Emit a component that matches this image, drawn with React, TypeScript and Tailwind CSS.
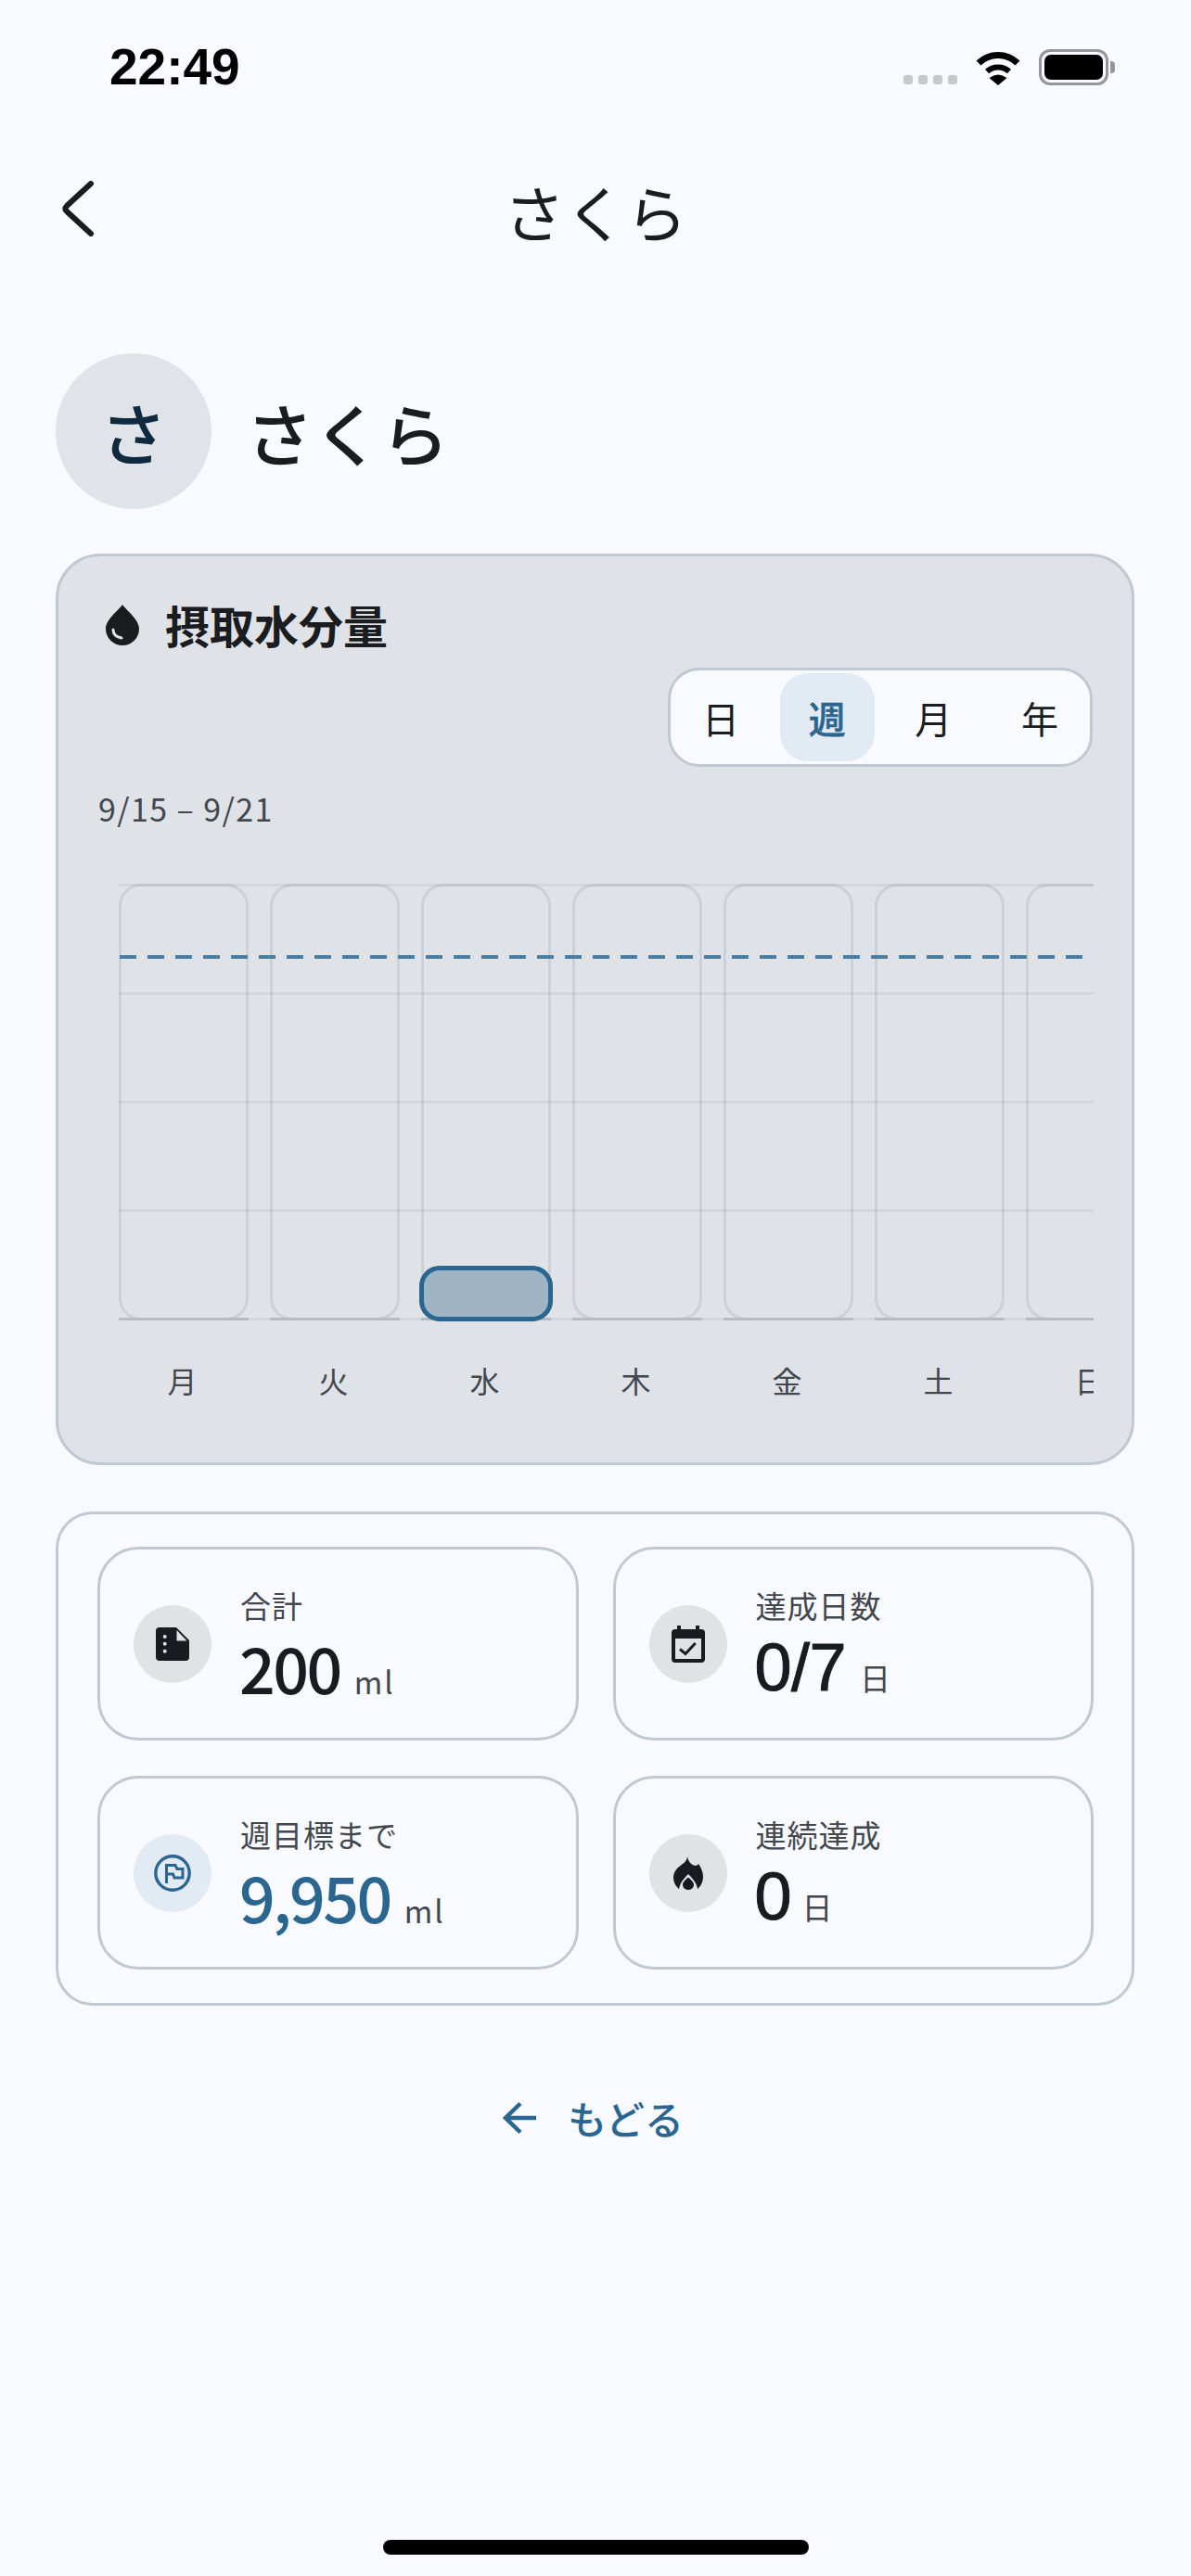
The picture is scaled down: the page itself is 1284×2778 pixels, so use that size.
const Wifi = () => (
  <svg width="50" height="37" viewBox="0 0 50 37" fill="none" className="block">
    <path d="M4 13 A30 30 0 0 1 46 13" stroke="#000" strokeWidth="7" />
    <path d="M13 22 A18 18 0 0 1 37 22" stroke="#000" strokeWidth="6" />
    <path d="M25 37 L15.5 29 Q25 22 34.5 29 Z" fill="#000" />
  </svg>
);

const DropIcon = () => (
  <svg width="36" height="44" viewBox="0 0 36 44" className="block">
    <path d="M18 0 C14 6 0 16 0 26 a18 18 0 0 0 36 0 C36 16 22 6 18 0 Z" fill="#1b1c1f" />
    <path d="M8 27 C8 32 11 35 17 36" fill="none" stroke="#dfe2e7" strokeWidth="3" strokeLinecap="round" />
  </svg>
);

const DocIcon = () => (
  <svg width="36" height="36" viewBox="0 0 36 36" className="block">
    <path d="M4 0 H22 L36 14 V32 a4 4 0 0 1 -4 4 H4 a4 4 0 0 1 -4 -4 V4 a4 4 0 0 1 4 -4 Z" fill="#181c20" />
    <path d="M22.5 3 V14.5 H33.5 Z" fill="#e0e2e6" />
    <circle cx="9.7" cy="10" r="2" fill="#e0e2e6" />
    <circle cx="9.7" cy="17.7" r="2" fill="#e0e2e6" />
    <circle cx="9.7" cy="25.7" r="2" fill="#e0e2e6" />
  </svg>
);

const CalendarIcon = () => (
  <svg width="36" height="40" viewBox="0 0 36 40" className="block">
    <path d="M6 0 H10 V4 H26 V0 H30 V4 H32 a4 4 0 0 1 4 4 V36 a4 4 0 0 1 -4 4 H4 a4 4 0 0 1 -4 -4 V8 a4 4 0 0 1 4 -4 H6 Z" fill="#181c20" />
    <rect x="4" y="14" width="28" height="22" fill="#e0e2e6" />
    <path d="M9 25.5 L15 30.5 L25.7 19" fill="none" stroke="#181c20" strokeWidth="3" />
  </svg>
);

const FlagIcon = () => (
  <svg width="40" height="40" viewBox="0 0 40 40" fill="none" className="block">
    <circle cx="20" cy="20" r="18.2" stroke="#2a6690" strokeWidth="3.4" />
    <path d="M13.5 31 V11.5 H23 L25 15.5 H31 V25 H22 L20.5 21 H13.5" stroke="#2a6690" strokeWidth="3" />
  </svg>
);

const FlameIcon = () => (
  <svg width="32" height="36" viewBox="0 0 32 36" className="block">
    <path d="M15 0 C15 6 9 8 4 13 C1 16 0 20 0 23 C0 28 3 33 7 36 H25 C29 33 32 28 32 22 C32 17 30 12 27 8 C26 10 24 10.500 21.500 9.500 C18 8 16 5 15 0 Z" fill="#181c20" />
    <path d="M6 36 C6 30 11 24 16 19 C21 24 26 30 26 36 Z" fill="#e0e2e6" />
    <path d="M16 22.500 C19 25.500 22 27.500 22 30.500 a6 5.500 0 0 1 -12 0 C10 27.500 13 25.500 16 22.500 Z" fill="#181c20" />
  </svg>
);

const days = ["月", "火", "水", "木", "金", "土", "日"];

function Stat({
  icon,
  tint,
  label,
  value,
  unit,
  valueClass,
}: {
  icon: React.ReactNode;
  tint: string;
  label: string;
  value: string;
  unit: string;
  valueClass: string;
}) {
  return (
    <div className="h-[209px] rounded-[44px] border-[3px] border-[#c0c8d2] pl-[36px] flex items-center gap-[31px]">
      <div className={`w-[84px] h-[84px] rounded-full flex items-center justify-center ${tint}`}>{icon}</div>
      <div className="flex flex-col">
        <div className="text-[33px] leading-[48px] text-[#42474e] tracking-[1px]">{label}</div>
        <div className="flex items-baseline h-[84px] leading-[86px] ml-[-1px]">
          <span className={valueClass}>{value}</span>
          <span className="text-[33px] text-[#42474e] ml-[15px] tracking-[2px]">{unit}</span>
        </div>
      </div>
    </div>
  );
}

export default function App() {
  return (
    <div className="w-[1284px] h-[2778px] bg-[#f8faff] flex flex-col font-['Noto_Sans_CJK_JP','Noto_Sans',sans-serif] text-[#1b1c1f] overflow-hidden">
      {/* status bar */}
      <div className="h-[100px] pl-[118px] pr-[82px] pt-[42px] flex items-start justify-between">
        <span className="font-['Liberation_Sans',sans-serif] font-bold text-[55px] leading-[60px] text-black">22:49</span>
        <div className="flex items-end pt-[11px] gap-[19px]">
          <div className="flex gap-[6px] mb-[1px]">
            <span className="w-[10px] h-[10px] rounded-[3px] bg-[#c7c8cc]" />
            <span className="w-[10px] h-[10px] rounded-[3px] bg-[#c7c8cc]" />
            <span className="w-[10px] h-[10px] rounded-[3px] bg-[#c7c8cc]" />
            <span className="w-[10px] h-[10px] rounded-[3px] bg-[#c7c8cc]" />
          </div>
          <Wifi />
          <div className="flex items-center gap-[2px]">
            <div className="w-[75px] h-[39px] rounded-[12px] border-[3px] border-[#96969a] p-[3px]">
              <div className="w-full h-full bg-black rounded-[7px]" />
            </div>
            <div className="w-[5px] h-[13px] bg-[#96969a] rounded-r-[4px]" />
          </div>
        </div>
      </div>

      {/* header */}
      <div className="h-[120px] mt-[68px] pl-[64px] pr-[64px] flex items-center justify-between">
        <div className="w-[120px] pb-[6px]">
          <svg width="36" height="60" viewBox="0 0 36 60" fill="none" className="block ml-[2px]">
            <path d="M32 3 L6 27 Q3 30 6 33 L32 57" stroke="#1b1c1f" strokeWidth="6" strokeLinecap="round" />
          </svg>
        </div>
        <div className="text-[66px] leading-[80px] font-normal pb-[3px]">さくら</div>
        <div className="w-[120px]" />
      </div>

      {/* profile */}
      <div className="mt-[93px] ml-[60px] flex items-center gap-[37px]">
        <div className="w-[168px] h-[168px] rounded-full bg-[#e0e3e7] flex items-center justify-center text-[72px] font-medium text-[#0f2a3f]">さ</div>
        <div className="text-[73px] font-medium leading-[100px]">さくら</div>
      </div>

      {/* chart card */}
      <div className="mt-[48px] mx-[60px] w-[1163px] h-[983px] rounded-[48px] border-[3px] border-[#c0c8d2] bg-[#dfe2e7] px-[43px] pt-[47px] flex flex-col">
        <div className="h-[52px] flex items-center">
          <div className="ml-[8px] mt-[2px]"><DropIcon /></div>
          <div className="ml-[28px] text-[48px] leading-[52px] font-bold">摂取水分量</div>
        </div>
        <div className="mt-[21px] self-end mr-[-1px] w-[458px] h-[107px] rounded-[34px] border-[3px] border-[#c0c8d2] bg-[#f8faff] px-[3px] flex items-center justify-between text-[40px]">
          <div className="w-[102px] h-[95px] flex items-center justify-center">日</div>
          <div className="w-[102px] h-[95px] rounded-[30px] bg-[#e2eaf3] flex items-center justify-center text-[#2a6690] font-medium [-webkit-text-stroke:0.5px_#2a6690]">週</div>
          <div className="w-[102px] h-[95px] flex items-center justify-center">月</div>
          <div className="w-[102px] h-[95px] flex items-center justify-center">年</div>
        </div>
        <div className="mt-[25px] h-[40px] text-[34px] leading-[40px] text-[#42474e] tracking-[1.4px]">9/15 – 9/21</div>

        <div className="relative mt-[61px] ml-[22px] w-[1051px] overflow-hidden">
          <div className="flex gap-[23px]">
            {days.map((d, i) => (
              <div key={i} className="w-[140px] shrink-0 flex flex-col items-center">
                <div className="relative w-[140px] h-[471px]">
                  <div className="w-full h-full rounded-[24px] border-[3px] border-[#ccd0d7]" />
                  <div className="absolute left-0 right-0 bottom-0 h-[3px] bg-[#c1c6ce]" />
                </div>
                <div className="mt-[40px] h-[48px] text-[32px] leading-[48px] text-[#42474e] w-[40px] text-center mr-[3px]">{d}</div>
              </div>
            ))}
          </div>
          <div className="absolute top-0 left-0 right-0 h-[471px] flex flex-col justify-between">
            <div className="h-[3px] bg-black/5" />
            <div className="h-[3px] bg-black/5" />
            <div className="h-[3px] bg-black/5" />
            <div className="h-[3px] bg-black/5" />
            <div className="h-[3px] bg-black/5" />
          </div>
          <svg width="1040" height="4" className="absolute top-[77px] left-[1px] block">
            <line x1="0" y1="2" x2="1040" y2="2" stroke="#4a7fa3" strokeWidth="4" strokeDasharray="18 12" />
          </svg>
          <div className="absolute left-[324px] top-[412px] w-[144px] h-[60px] rounded-[22px] border-[5px] border-[#2a6690] bg-[#9fb5c6]" />
        </div>
      </div>

      {/* stats */}
      <div className="mt-[50px] mx-[60px] w-[1163px] rounded-[40px] border-[3px] border-[#c0c8d2] pl-[42px] pr-[41px] pt-[35px] pb-[36px] grid grid-cols-2 gap-x-[37px] gap-y-[38px]">
        <Stat
          icon={<DocIcon />}
          tint="bg-[#e0e2e6]"
          label="合計"
          value="200"
          unit="ml"
          valueClass="text-[68px] font-medium text-[#181c20] tracking-[-2.5px]"
        />
        <Stat
          icon={<CalendarIcon />}
          tint="bg-[#e0e2e6]"
          label="達成日数"
          value="0/7"
          unit="日"
          valueClass="text-[72px] font-['Liberation_Sans',sans-serif] text-[#181c20] tracking-[-0.5px] [-webkit-text-stroke:1px_#181c20]"
        />
        <Stat
          icon={<FlagIcon />}
          tint="bg-[#e2eaf3]"
          label="週目標まで"
          value="9,950"
          unit="ml"
          valueClass="text-[68px] font-medium text-[#2a6690] tracking-[-2.5px]"
        />
        <Stat
          icon={<FlameIcon />}
          tint="bg-[#e0e2e6]"
          label="連続達成"
          value="0"
          unit="日"
          valueClass="text-[72px] font-['Liberation_Sans',sans-serif] text-[#181c20] tracking-[-4px] [-webkit-text-stroke:1px_#181c20]"
        />
      </div>

      {/* back */}
      <div className="mt-[91px] h-[60px] flex items-center justify-center gap-[34px] pr-[5px] text-[#2a6690]">
        <svg width="36" height="34" viewBox="0 0 36 34" fill="none" className="block">
          <path d="M36 17 H3 M19 1.500 L3 17 L19 32.500" stroke="#2a6690" strokeWidth="4.500" />
        </svg>
        <span className="text-[42px] leading-[60px] font-medium">もどる</span>
      </div>

      {/* home indicator */}
      <div className="mt-auto mb-[23px] mx-auto w-[459px] h-[16px] rounded-full bg-black" />
    </div>
  );
}
